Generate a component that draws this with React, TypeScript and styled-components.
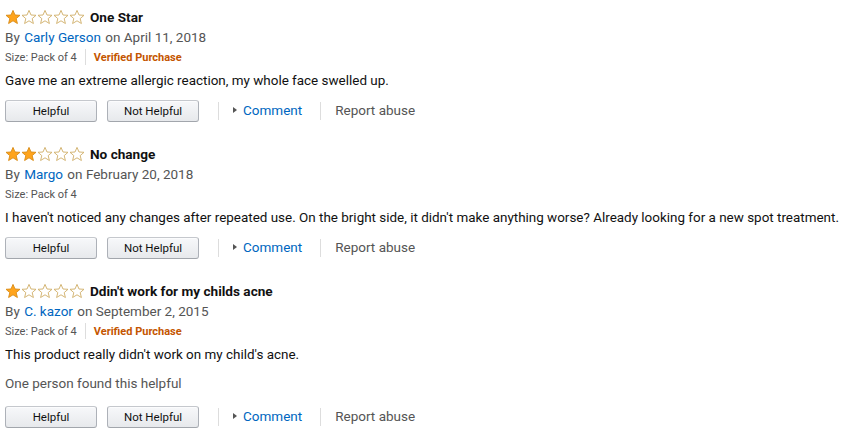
import React from "react";
import styled, { createGlobalStyle } from "styled-components";

const GlobalStyle = createGlobalStyle`
  html, body { margin: 0; padding: 0; background: #ffffff; }
  body { font-family: Roboto, "Liberation Sans", Arial, sans-serif; color: #111111; }
`;

const Page = styled.div`
  padding: 7px 5px 0 5px;
  display: flex;
  flex-direction: column;
  gap: 22px;
`;

const ReviewCard = styled.section`
  display: flex;
  flex-direction: column;
`;

const HeaderRow = styled.div`
  display: flex;
  align-items: center;
  height: 20px;
  gap: 5px;
`;

const Stars = styled.div`
  display: flex;
  align-items: center;
  width: 80px;
`;

const Title = styled.span`
  font-weight: 700;
  font-size: 13.6px;
  color: #111111;
`;

const ByLine = styled.div`
  height: 20px;
  line-height: 20px;
  font-size: 13.5px;
  color: #555555;
  white-space: nowrap;
`;

const Author = styled.a`
  color: #0066c0;
  text-decoration: none;
  margin: 0 1px;
`;

const MetaRow = styled.div`
  display: flex;
  align-items: center;
  height: 20px;
  font-size: 11px;
  color: #555555;
`;

const MetaDivider = styled.span`
  width: 1px;
  height: 16px;
  background: #dddddd;
  margin: 0 8px 0 8px;
`;

const Verified = styled.span`
  color: #c45500;
  font-weight: 700;
`;

const Body = styled.p`
  margin: 4px 0 0 0;
  height: 20px;
  line-height: 20px;
  font-size: 13.45px;
  color: #111111;
  white-space: nowrap;
`;

const HelpfulCount = styled.div`
  margin: 8px 0 4px 0;
  height: 20px;
  line-height: 20px;
  font-size: 13.5px;
  color: #555555;
`;

const Actions = styled.div`
  display: flex;
  align-items: center;
  margin-top: 9px;
  height: 22px;
`;

const VoteButton = styled.button<{ $gap?: number }>`
  box-sizing: border-box;
  width: 92px;
  height: 22px;
  margin-right: ${(p) => p.$gap ?? 0}px;
  padding: 0;
  border: 1px solid #adb1b8;
  border-top-color: #c5c8cd;
  border-bottom-color: #a2a6ac;
  border-radius: 3px;
  background: linear-gradient(to bottom, #f7f8fa, #e7e9ec);
  box-shadow: inset 0 1px 0 rgba(255, 255, 255, 0.6);
  font-family: Roboto, "Liberation Sans", Arial, sans-serif;
  font-size: 11.5px;
  color: #111111;
  line-height: 20px;
  cursor: pointer;
`;

const ActionDivider = styled.span`
  width: 1px;
  height: 18px;
  background: #dddddd;
`;

const CommentLink = styled.a`
  display: flex;
  align-items: center;
  margin: 0 18px 0 14px;
  padding-bottom: 2px;
  color: #0066c0;
  text-decoration: none;
  font-size: 13.5px;
  gap: 6px;
`;

const Caret = styled.span`
  width: 0;
  height: 0;
  border-top: 3.5px solid transparent;
  border-bottom: 3.5px solid transparent;
  border-left: 4px solid #555555;
`;

const ReportLink = styled.a`
  margin-left: 14px;
  padding-bottom: 2px;
  color: #555555;
  text-decoration: none;
  font-size: 13.5px;
`;

const STAR = "M7 0.4 L9 5 L14 5.3 L10.2 8.6 L11.4 13.5 L7 10.8 L2.6 13.5 L3.8 8.6 L0 5.3 L5 5 Z";

function Star({ filled }: { filled: boolean }) {
  return (
    <svg width="16" height="16" viewBox="-1 -1 16 16" aria-hidden="true">
      <path
        d={STAR}
        fill={filled ? "#ffa41c" : "#ffffff"}
        stroke={filled ? "#d88a14" : "#cfae67"}
        strokeWidth="0.9"
        strokeLinejoin="round"
      />
    </svg>
  );
}

function Rating({ value }: { value: number }) {
  return (
    <Stars>
      {[0, 1, 2, 3, 4].map((i) => (
        <Star key={i} filled={i < value} />
      ))}
    </Stars>
  );
}

type Review = {
  stars: number;
  title: string;
  author: string;
  date: string;
  verified: boolean;
  body: string;
  helpful?: string;
};

const reviews: Review[] = [
  {
    stars: 1,
    title: "One Star",
    author: "Carly Gerson",
    date: "April 11, 2018",
    verified: true,
    body: "Gave me an extreme allergic reaction, my whole face swelled up.",
  },
  {
    stars: 2,
    title: "No change",
    author: "Margo",
    date: "February 20, 2018",
    verified: false,
    body: "I haven't noticed any changes after repeated use. On the bright side, it didn't make anything worse? Already looking for a new spot treatment.",
  },
  {
    stars: 1,
    title: "Ddin't work for my childs acne",
    author: "C. kazor",
    date: "September 2, 2015",
    verified: true,
    body: "This product really didn't work on my child's acne.",
    helpful: "One person found this helpful",
  },
];

export default function App() {
  return (
    <>
      <GlobalStyle />
      <Page>
        {reviews.map((r) => (
          <ReviewCard key={r.title}>
            <HeaderRow>
              <Rating value={r.stars} />
              <Title>{r.title}</Title>
            </HeaderRow>
            <ByLine>
              By <Author href="#">{r.author}</Author> on {r.date}
            </ByLine>
            <MetaRow>
              <span>Size: Pack of 4</span>
              {r.verified && (
                <>
                  <MetaDivider />
                  <Verified>Verified Purchase</Verified>
                </>
              )}
            </MetaRow>
            <Body>{r.body}</Body>
            {r.helpful && <HelpfulCount>{r.helpful}</HelpfulCount>}
            <Actions>
              <VoteButton $gap={10}>Helpful</VoteButton>
              <VoteButton $gap={19}>Not Helpful</VoteButton>
              <ActionDivider />
              <CommentLink href="#">
                <Caret />
                Comment
              </CommentLink>
              <ActionDivider />
              <ReportLink href="#">Report abuse</ReportLink>
            </Actions>
          </ReviewCard>
        ))}
      </Page>
    </>
  );
}
